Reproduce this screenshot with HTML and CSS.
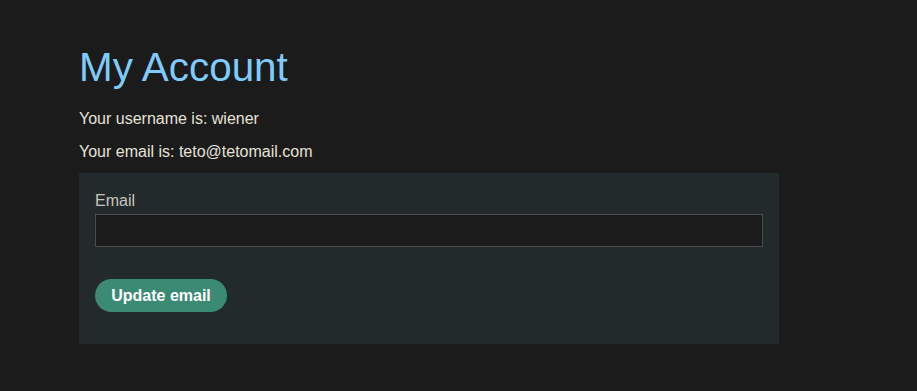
FILE: index.html
```html
<!DOCTYPE html>
<html>
<head>
<meta charset="utf-8">
<link rel="stylesheet" href="styles.css">
</head>
<body>
<main class="container">
  <h1 class="title">My Account</h1>
  <p class="info">Your username is: wiener</p>
  <p class="info">Your email is: teto@tetomail.com</p>
  <form class="panel">
    <label class="label" for="email">Email</label>
    <input class="input" id="email" type="email">
    <button class="btn" type="button">Update email</button>
  </form>
</main>
</body>
</html>
```
FILE: styles.css
```css
html, body {
  margin: 0;
  padding: 0;
  background: #1b1b1b;
}
body {
  font-family: "Liberation Sans", Arial, sans-serif;
  color: #e6e2d8;
}
.container {
  padding: 43px 0 0 79px;
  width: 700px;
}
.title {
  margin: 0;
  font-size: 40.4px;
  font-weight: normal;
  line-height: 48px;
  color: #7fcbf9;
}
.info {
  margin: 0;
  font-size: 16px;
  line-height: 19px;
  margin-top: 14px;
}
.title + .info {
  margin-top: 18px;
}
.panel {
  margin-top: 12px;
  background: #222a2b;
  padding: 18px 16px 32px 16px;
  display: flex;
  flex-direction: column;
  align-items: flex-start;
  height: 171px;
  box-sizing: border-box;
}
.label {
  font-size: 16px;
  line-height: 19px;
  color: #c9c5ba;
}
.input {
  margin-top: 4px;
  width: 668px;
  height: 33px;
  box-sizing: border-box;
  background: #1b1b1b;
  border: 1px solid #4b4d4d;
  color: #e6e2d8;
  font-size: 16px;
  padding: 0 8px;
}
.btn {
  margin-top: 32px;
  height: 33px;
  width: 132px;
  border: none;
  border-radius: 17px;
  background: #3b8a74;
  color: #ffffff;
  font-family: "Liberation Sans", Arial, sans-serif;
  font-weight: bold;
  font-size: 16px;
  padding: 0;
}
```
